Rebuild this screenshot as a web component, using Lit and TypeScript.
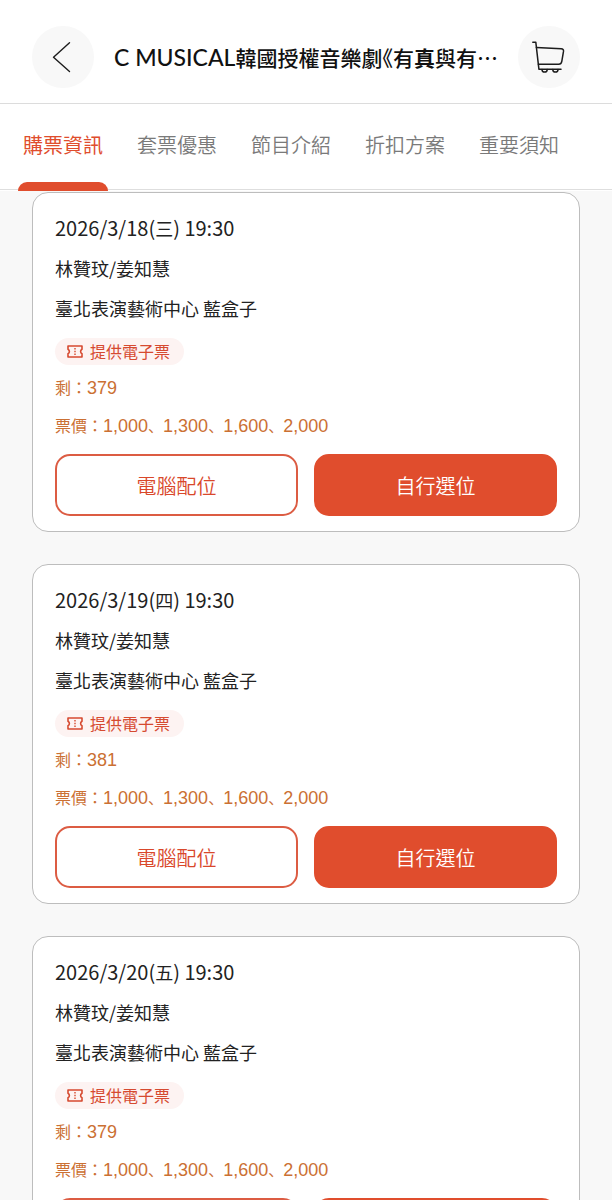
import { LitElement, html, css, svg } from "lit";
import { customElement, property, state } from "lit/decorators.js";

interface Session {
  date: string;
  weekday: string;
  time: string;
  cast: [string, string];
  venue: string;
  left: number;
  prices: string[];
}

const PRICES = ["1,000", "1,300", "1,600", "2,000"];

const SESSIONS: Session[] = [
  { date: "2026/3/18", weekday: "三", time: "19:30", cast: ["林贊玟", "姜知慧"], venue: "臺北表演藝術中心 藍盒子", left: 379, prices: PRICES },
  { date: "2026/3/19", weekday: "四", time: "19:30", cast: ["林贊玟", "姜知慧"], venue: "臺北表演藝術中心 藍盒子", left: 381, prices: PRICES },
  { date: "2026/3/20", weekday: "五", time: "19:30", cast: ["林贊玟", "姜知慧"], venue: "臺北表演藝術中心 藍盒子", left: 379, prices: PRICES },
];

const TABS = ["購票資訊", "套票優惠", "節目介紹", "折扣方案", "重要須知"];

const ticketIcon = svg`
  <svg class="ticket" viewBox="0 0 16 13" width="16" height="13" fill="none" stroke="currentColor" stroke-width="1.6" stroke-linejoin="round" aria-hidden="true">
    <path d="M1 1H15V4.2A2.6 2.6 0 0 0 15 8.8V12H1V8.8A2.6 2.6 0 0 0 1 4.2Z" />
    <path d="M8 3V4.6M8 5.7V7.3M8 8.4V10" stroke-width="1.4" />
  </svg>`;

@customElement("session-card")
export class SessionCard extends LitElement {
  @property({ attribute: false }) session!: Session;

  static styles = css`
    :host {
      display: block;
      box-sizing: border-box;
      padding: 15px 22px;
      border: 1px solid #bdbdbd;
      border-radius: 16px;
      background: #fff;
      color: #222;
      font-family: "Noto Sans CJK TC", sans-serif;
    }
    p {
      margin: 0;
      white-space: nowrap;
    }
    .line {
      font-size: 18px;
      line-height: 40px;
      height: 40px;
    }
    .latin {
      font-size: 20px;
    }
    .badge {
      display: flex;
      align-items: center;
      gap: 7px;
      box-sizing: border-box;
      width: fit-content;
      height: 27px;
      margin: 10px 0 3px;
      padding: 0 14px 0 12px;
      border-radius: 14px;
      background: #fdf3f2;
      color: #d64a30;
      font-size: 16px;
      line-height: 27px;
    }
    .ticket {
      display: block;
    }
    .price {
      color: #cb7033;
      font-size: 16px;
      line-height: 38px;
      height: 38px;
    }
    .number {
      font-family: "Liberation Sans", Arial, sans-serif;
      font-size: 18px;
    }
    .comma {
      font-family: "Noto Sans CJK SC", sans-serif;
      font-size: 15px;
    }
    .actions {
      display: grid;
      grid-template-columns: 1fr 1fr;
      gap: 16px;
      margin-top: 10px;
    }
    button {
      height: 62px;
      padding: 0;
      border: 2px solid #e04d2d;
      border-radius: 15px;
      font: 350 20px "Noto Sans CJK TC", sans-serif;
      cursor: pointer;
    }
    .auto {
      border-color: #dc5c43;
      background: #fff;
      color: #d9482b;
    }
    .pick {
      background: #e04d2d;
      color: #fff;
    }
  `;

  render() {
    const s = this.session;
    return html`
      <p class="line"><span class="latin">${s.date}(</span>${s.weekday}<span class="latin">) ${s.time}</span></p>
      <p class="line">${s.cast[0]}/${s.cast[1]}</p>
      <p class="line">${s.venue}</p>
      <p class="badge">${ticketIcon}<span>提供電子票</span></p>
      <p class="price">剩：<span class="number">${s.left}</span></p>
      <p class="price">票價：${s.prices.map((p, i) => html`${i ? html`<span class="comma">、</span>` : ""}<span class="number">${p}</span>`)}</p>
      <div class="actions">
        <button class="auto" type="button">電腦配位</button>
        <button class="pick" type="button">自行選位</button>
      </div>
    `;
  }
}

@customElement("app-root")
export class AppRoot extends LitElement {
  @state() private active = 0;

  static styles = css`
    :host {
      display: flex;
      flex-direction: column;
      height: 100vh;
      overflow: hidden;
      background: #f8f8f8;
      font-family: "Noto Sans CJK TC", sans-serif;
    }
    .top {
      flex: none;
      display: flex;
      align-items: center;
      gap: 20px;
      box-sizing: border-box;
      padding: 26px 32px 15px;
      border-bottom: 1px solid #dcdcdc;
      background: #fff;
    }
    .round {
      flex: none;
      display: grid;
      place-items: center;
      width: 62px;
      height: 62px;
      padding: 0;
      border: 0;
      border-radius: 50%;
      background: #f8f8f8;
      color: #1c1c1c;
      cursor: pointer;
    }
    .title {
      flex: 1;
      min-width: 0;
      margin: 0;
      overflow: hidden;
      color: #111;
      font-size: 21px;
      font-weight: 500;
      line-height: 32px;
      white-space: nowrap;
    }
    .latin {
      font-family: Lato, sans-serif;
      font-size: 23px;
    }
    .half {
      font-feature-settings: "halt";
    }
    .strong {
      font-weight: 700;
    }
    .tabs {
      flex: none;
      display: flex;
      gap: 24px;
      padding: 0 18px;
      background: linear-gradient(#dedede, #dedede) 0 85px / 100% 1px no-repeat #fff;
    }
    .tab {
      flex: none;
      display: flex;
      flex-direction: column;
      justify-content: space-between;
      height: 87px;
      padding: 0;
      border: 0;
      background: none;
      color: #7a7a7a;
      font: 350 20px/30px "Noto Sans CJK TC", sans-serif;
      cursor: pointer;
    }
    .tab[aria-selected="true"] {
      color: #e04d2d;
      font-weight: 400;
    }
    .label {
      padding: 26px 5px 0;
    }
    .bar {
      width: 100%;
      height: 9px;
      border-radius: 9px 9px 0 0;
    }
    .tab[aria-selected="true"] .bar {
      background: #e04d2d;
    }
    .list {
      flex: 1;
      min-height: 0;
      display: flex;
      flex-direction: column;
      gap: 32px;
      padding: 1px 32px 32px;
      overflow-y: auto;
      scrollbar-width: none;
    }
    session-card {
      flex: none;
    }
  `;

  render() {
    return html`
      <header class="top">
        <button class="round" type="button" aria-label="返回">
          <svg width="32" height="32" viewBox="0 0 32 32" fill="none" stroke="currentColor" stroke-width="1.4" stroke-linecap="round" stroke-linejoin="round">
            <path d="M22.5 1.8L6.5 16.2L22.5 30.5" />
          </svg>
        </button>
        <h1 class="title"><span class="latin">C MUSICAL</span>韓國授權音樂劇<span class="half">《</span>有<span class="strong">真</span>與有…</h1>
        <button class="round" type="button" aria-label="購物車">
          <svg width="36" height="36" viewBox="0 0 36 36" fill="none" stroke="currentColor" stroke-width="1.5" stroke-linecap="round" stroke-linejoin="round">
            <path d="M1.8 3.2H4.8L7.9 30.2H30" />
            <path d="M5.4 8.5L30.2 9.8Q32.8 10 32.5 12.4L30.8 22.4Q30.3 25.3 27.6 25.3H7.4" />
            <path d="M11 30.4A2.6 2.6 0 0 0 16.2 30.4M21.8 30.4A2.6 2.6 0 0 0 27 30.4" />
          </svg>
        </button>
      </header>
      <nav class="tabs" role="tablist">
        ${TABS.map(
          (t, i) => html`
            <button class="tab" type="button" role="tab" aria-selected=${this.active === i ? "true" : "false"} @click=${() => (this.active = i)}>
              <span class="label">${t}</span><span class="bar"></span>
            </button>
          `,
        )}
      </nav>
      <main class="list">${SESSIONS.map((s) => html`<session-card .session=${s}></session-card>`)}</main>
    `;
  }
}
